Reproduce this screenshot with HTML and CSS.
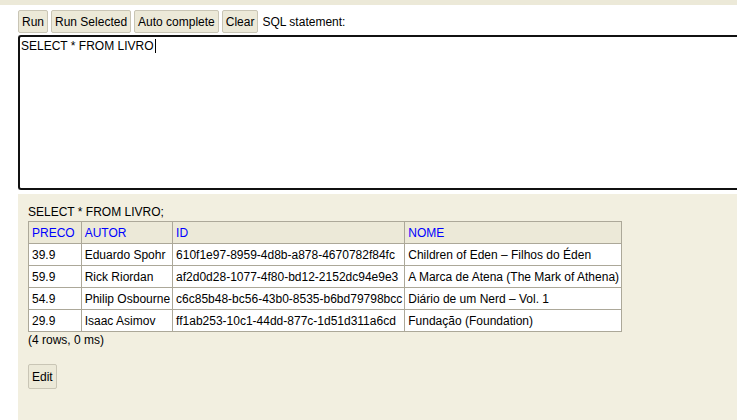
FILE: index.html
```html
<!DOCTYPE html>
<html>
<head>
<meta charset="utf-8">
<link rel="stylesheet" href="styles.css">
</head>
<body>
<div class="topstrip"></div>
<div class="query">
  <div class="toolbar">
    <button class="btn">Run</button>
    <button class="btn">Run Selected</button>
    <button class="btn">Auto complete</button>
    <button class="btn">Clear</button>
    <span class="label">SQL statement:</span>
  </div>
  <div class="editor">SELECT * FROM LIVRO<span class="caret"></span></div>
</div>
<div class="result">
  <div class="stmt">SELECT * FROM LIVRO;</div>
  <table class="grid">
    <tr><th class="first">PRECO</th><th>AUTOR</th><th>ID</th><th>NOME</th></tr>
    <tr><td>39.9</td><td>Eduardo Spohr</td><td>610f1e97-8959-4d8b-a878-4670782f84fc</td><td>Children of Eden – Filhos do Éden</td></tr>
    <tr><td>59.9</td><td>Rick Riordan</td><td>af2d0d28-1077-4f80-bd12-2152dc94e9e3</td><td>A Marca de Atena (The Mark of Athena)</td></tr>
    <tr><td>54.9</td><td>Philip Osbourne</td><td>c6c85b48-bc56-43b0-8535-b6bd79798bcc</td><td>Diário de um Nerd – Vol. 1</td></tr>
    <tr><td>29.9</td><td>Isaac Asimov</td><td>ff1ab253-10c1-44dd-877c-1d51d311a6cd</td><td>Fundação (Foundation)</td></tr>
  </table>
  <div class="count">(4 rows, 0 ms)</div>
  <button class="btn edit">Edit</button>
</div>
</body>
</html>
```
FILE: styles.css
```css
html, body {
  margin: 0;
  padding: 0;
  background: #fff;
  font-family: "Liberation Sans", Arial, sans-serif;
  font-size: 12px;
  color: #000;
  overflow: hidden;
  height: 420px;
}
.topstrip {
  height: 5px;
  background: #ece9d8;
}
.query {
  padding: 5px 0 0 18px;
  height: 189px;
  box-sizing: border-box;
  overflow: hidden;
}
.toolbar {
  display: flex;
  align-items: center;
  gap: 3px;
  height: 23px;
}
.btn {
  font-family: "Liberation Sans", Arial, sans-serif;
  font-size: 12px;
  height: 23px;
  padding: 0 3px;
  background: #ece9d8;
  border: 1px solid #c9c5b5;
  border-radius: 2px;
  color: #000;
  margin: 0;
}
.label {
  margin-left: 1px;
}
.editor {
  margin-top: 2px;
  width: 730px;
  height: 155px;
  box-sizing: border-box;
  border: 2px solid #111;
  border-right: none;
  border-radius: 3px 0 0 3px;
  padding: 2px 1px;
  line-height: 14px;
}
.caret {
  display: inline-block;
  width: 1px;
  height: 14px;
  background: #000;
  margin-left: 2px;
  vertical-align: top;
}
.result {
  margin-left: 18px;
  background: #f2efe0;
  height: 226px;
  padding: 10px 10px 0 10px;
  box-sizing: border-box;
}
.stmt {
  line-height: 16px;
  margin-bottom: 1px;
}
.grid {
  border-collapse: collapse;
  background: #fff;
}
.grid th, .grid td {
  border: 1px solid #aca899;
  padding: 0 2px 0 3px;
  height: 21px;
  text-align: left;
  font-weight: normal;
  white-space: nowrap;
}
.grid th {
  background: #ece9d8;
  color: #0000ff;
}
.grid th.first {
  padding-right: 6px;
}
.count {
  line-height: 16px;
  margin-top: 0;
}
.btn.edit {
  margin-top: 16px;
  height: 25px;
  padding: 0 3px;
}
```
